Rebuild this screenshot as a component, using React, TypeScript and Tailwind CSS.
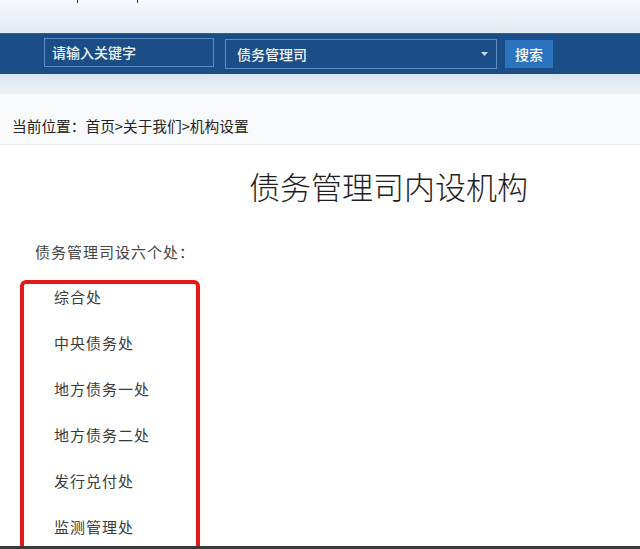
import React from 'react';

const sans = { fontFamily: '"Noto Sans CJK SC", "Noto Sans", sans-serif' };

const offices = ['综合处', '中央债务处', '地方债务一处', '地方债务二处', '发行兑付处', '监测管理处'];

/**
 * Search bar under the site banner
 */
const SearchBar: React.FC = () => (
  <div className="h-[41px] bg-[#1b4e86] border-t border-[#2c5f98] flex items-center pl-[44px]">
    <div className="w-[170px] h-[29px] -mt-[3px] border border-[#5b8dc4] flex items-center pl-[7px] text-[14px] font-medium text-[#eef4fb]">
      请输入关键字
    </div>
    <div className="ml-[11px] w-[272px] h-[30px] border border-[#5b8dc4] flex items-center justify-between pl-[11px] pr-[8px] text-[14px] font-medium text-[#eef4fb]">
      <span>债务管理司</span>
      <svg width="7" height="4" viewBox="0 0 7 4">
        <path d="M0 0h7L3.5 4z" fill="#c9d8ea" />
      </svg>
    </div>
    <div className="ml-[8px] w-[48px] h-[28px] bg-[#2a74bf] flex items-center justify-center text-[14px] font-medium text-white">
      搜索
    </div>
  </div>
);

const App: React.FC = () => {
  return (
    <div className="w-[640px] h-[549px] overflow-hidden flex flex-col bg-[#fbfcfd]" style={sans}>
      {/* banner remains */}
      <div className="h-[33px] bg-gradient-to-b from-[#f7f9fc] to-[#e3ebf4] flex items-start">
        <div className="ml-[77px] w-[1px] h-[3px] bg-[#333]"></div>
        <div className="ml-[59px] w-[1px] h-[3px] bg-[#333]"></div>
      </div>

      <SearchBar />

      <div className="h-[20px] bg-gradient-to-b from-[#d9e5f1] to-[#eef3f8]"></div>

      {/* breadcrumb */}
      <div className="h-[51px] pt-[23px] pl-[12px] border-b border-[#e7e9ed] bg-[#f9fafc]">
        <div className="text-[14.7px] leading-[18px] text-[#222]">当前位置：首页&gt;关于我们&gt;机构设置</div>
      </div>

      {/* content */}
      <div className="flex-1 min-h-0 overflow-hidden bg-white">
        <h1 className="pt-[21px] pl-[249px] text-[31px] leading-[40px] font-light text-[#1e1e1e]">
          债务管理司内设机构
        </h1>

        <p className="mt-[36px] pl-[35px] text-[15px] leading-[20px] text-[#444] tracking-[1px]">
          债务管理司设六个处：
        </p>

        <div className="mt-[18px] ml-[20px] w-[180px] border-[4px] border-[#e4171b] rounded-[6px] pt-[3px] pl-[30px] pb-[20px] flex flex-col gap-[26px]">
          {offices.map((name) => (
            <div key={name} className="text-[15px] leading-[20px] text-[#3a3a3a] tracking-[1px]">
              {name}
            </div>
          ))}
        </div>
      </div>

      <div className="h-[3px] bg-[#3a3a3a]"></div>
    </div>
  );
};

export default App;
